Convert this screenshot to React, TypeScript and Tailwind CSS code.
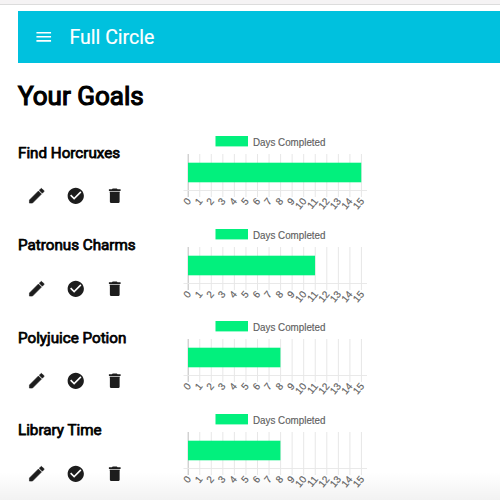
import React from "react";
import { MdMenu, MdCheckCircle } from "react-icons/md";

const goals = [
  { name: "Find Horcruxes", days: 15 },
  { name: "Patronus Charms", days: 11 },
  { name: "Polyjuice Potion", days: 8 },
  { name: "Library Time", days: 8 },
];

const STEP = 11.55;
const ticks = Array.from({ length: 16 }, (_, i) => i);

function PencilIcon() {
  return (
    <svg
      className="size-[19.5px] fill-current stroke-current stroke-[0.7px]"
      viewBox="0 0 24 24"
      strokeLinejoin="round"
    >
      <path d="M3 17.25V21h3.75L17.81 9.94l-3.75-3.75L3 17.25z" />
      <path d="M20.71 7.04a1 1 0 0 0 0-1.41l-2.34-2.34a1 1 0 0 0-1.41 0l-1.83 1.83 3.75 3.75 1.83-1.83z" />
    </svg>
  );
}

function TrashIcon() {
  return (
    <svg className="size-[19.5px] fill-current" viewBox="0 0 24 24">
      <path d="M6 19c0 1.1.9 2 2 2h8c1.1 0 2-.9 2-2V7H6v12z" />
      <path d="M5.5 7h13v1.2h-13z" fillOpacity="0.45" />
      <path d="M19.2 4h-3.7l-1-1h-5l-1 1H4.8v2.2h14.4V4z" />
    </svg>
  );
}

function GoalChart({ days }: { days: number }) {
  return (
    <svg className="block h-[92.5px] w-[200px] shrink-0" viewBox="0 0 200 92.5">
      <rect x="35.5" y="6" width="32.5" height="10.4" fill="#02f07d" />
      <text
        x="73"
        y="15.6"
        textLength="72.5"
        lengthAdjust="spacingAndGlyphs"
        className="fill-[#606060] stroke-[#606060] stroke-[0.15px] font-['Liberation_Sans',sans-serif] text-[10.2px]"
      >
        Days Completed
      </text>
      {ticks.map((t) => (
        <line
          key={t}
          x1={8.2 + t * STEP}
          x2={8.2 + t * STEP}
          y1="24"
          y2="67"
          stroke={t === 0 ? "#b5b5b5" : "#e4e4e4"}
          strokeWidth="0.9"
        />
      ))}
      <line x1="3.5" x2="187" y1="60.5" y2="60.5" stroke="#e6e6e6" strokeWidth="0.9" />
      <rect x="8" y="32.7" width={days * STEP} height="19.6" fill="#02f07d" />
      {ticks.map((t) => (
        <text
          key={t}
          transform={`translate(${8.8 + t * STEP} 69.2) rotate(-50)`}
          textAnchor="end"
          y="3.5"
          className="fill-[#606060] stroke-[#606060] stroke-[0.15px] font-['Liberation_Sans',sans-serif] text-[10px]"
        >
          {t}
        </text>
      ))}
    </svg>
  );
}

function GoalRow({ name, days }: { name: string; days: number }) {
  return (
    <section className="flex h-[92.5px]">
      <div className="w-[162px] shrink-0 pt-[12.5px]">
        <h2 className="h-5 whitespace-nowrap text-[15.2px] leading-5 font-normal text-black [-webkit-text-stroke:0.75px_black]">
          {name}
        </h2>
        <div className="mt-[23.9px] ml-[9.4px] flex gap-[19.5px] text-[19.5px] text-[#1d1d1d]">
          <PencilIcon />
          <MdCheckCircle />
          <TrashIcon />
        </div>
      </div>
      <GoalChart days={days} />
    </section>
  );
}

export default function App() {
  return (
    <div className="relative h-[500px] w-[500px] overflow-hidden bg-white font-[Roboto,sans-serif]">
      <div className="h-[5px] border-b border-[#dcdcdc] bg-[#f5f3f4]" />
      <main className="pt-1.5 pl-[17.5px]">
        <header className="flex h-[52px] items-center bg-[#00c1de] pl-4 text-white">
          <MdMenu className="size-[19.5px]" />
          <span className="ml-4 pt-0.5 pl-[0.5px] text-[19.5px] leading-none [-webkit-text-stroke:0.2px_white]">
            Full Circle
          </span>
        </header>
        <h1 className="mt-[18px] h-[29px] pl-[0.5px] text-[26px] leading-[30px] font-normal text-black [-webkit-text-stroke:1.2px_black]">
          Your Goals
        </h1>
        <div className="mt-5 pl-[0.5px]">
          {goals.map((g) => (
            <GoalRow key={g.name} name={g.name} days={g.days} />
          ))}
        </div>
      </main>
      <div className="pointer-events-none absolute inset-x-0 bottom-0 h-7 bg-linear-to-b from-transparent to-black/5" />
    </div>
  );
}
